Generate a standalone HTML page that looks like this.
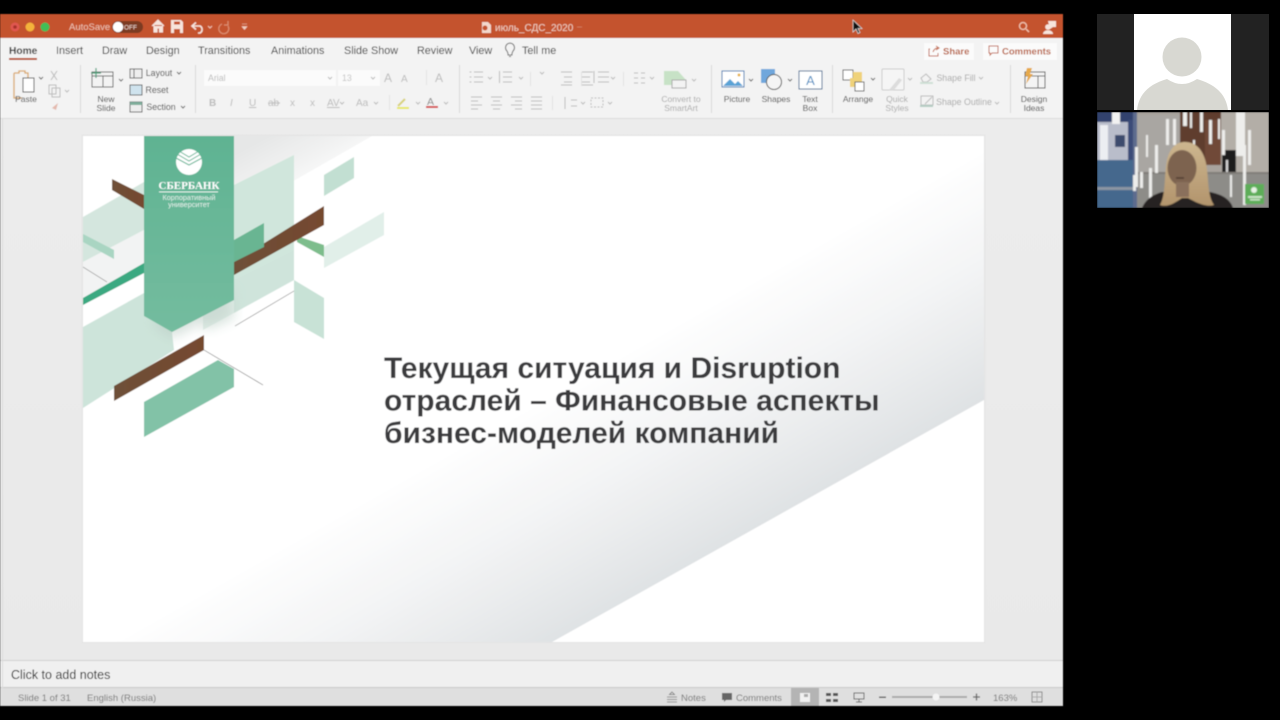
<!DOCTYPE html>
<html><head><meta charset="utf-8"><style>
html,body{margin:0;padding:0;background:#000;width:1280px;height:720px;overflow:hidden}
svg{display:block}
text{font-family:"Liberation Sans",sans-serif}
.t{font-size:10.8px;fill:#333}
.r{font-size:8.5px;fill:#444;text-anchor:middle}
.d{font-size:8.5px;fill:#aaa;text-anchor:middle}
.s{font-size:9.5px;fill:#777}
.i{fill:none;stroke:#666;stroke-width:1}
.g{fill:none;stroke:#bbb;stroke-width:1}
</style></head><body>
<svg width="1280" height="720" viewBox="0 0 1280 720" xmlns="http://www.w3.org/2000/svg">
<defs>
<linearGradient id="gr" gradientUnits="userSpaceOnUse" x1="768" y1="521" x2="660" y2="330"><stop offset="0" stop-color="#dfe2e4"/><stop offset=".5" stop-color="#f2f3f4"/><stop offset="1" stop-color="#fff"/></linearGradient>
<linearGradient id="sh" gradientUnits="userSpaceOnUse" x1="300" y1="210" x2="262" y2="140"><stop offset="0" stop-color="#fff"/><stop offset="1" stop-color="#e6e7e7"/></linearGradient>
<linearGradient id="ban" x1="0" y1="0" x2="0" y2="1"><stop offset="0" stop-color="#5fb392"/><stop offset="1" stop-color="#74bc9f"/></linearGradient>
<linearGradient id="br" x1="0" y1="0" x2="1" y2="0"><stop offset="0" stop-color="#6e5038"/><stop offset="1" stop-color="#75482f"/></linearGradient>
<linearGradient id="ca" x1="0" y1="0" x2="0" y2="1"><stop offset="0" stop-color="#ececec"/><stop offset="1" stop-color="#e9e9e9"/></linearGradient>
<linearGradient id="hair" x1="0" y1="0" x2="0" y2="1"><stop offset="0" stop-color="#cdb68f"/><stop offset="1" stop-color="#b2946c"/></linearGradient>
<filter id="bl" x="-30%" y="-30%" width="160%" height="160%"><feGaussianBlur stdDeviation="6"/></filter>
<filter id="v" x="-5%" y="-5%" width="110%" height="110%"><feGaussianBlur stdDeviation=".8"/></filter>
<filter id="u"><feGaussianBlur stdDeviation=".4"/></filter>
<clipPath id="vc"><rect x="1097" y="112" width="172" height="96"/></clipPath>
<clipPath id="pc"><rect x="1097" y="14" width="172" height="96"/></clipPath>
<clipPath id="sc"><rect x="83" y="136" width="901" height="506"/></clipPath>
</defs>
<rect width="1280" height="720" fill="#000"/>

<g filter="url(#u)">
<!-- window -->
<rect x="0" y="14" width="1063" height="692" fill="#ebebeb"/>
<rect x="0" y="14" width="1063" height="24" fill="#c4532f"/>
<rect x="0" y="38" width="1063" height="80" fill="#f3f3f3"/>
<rect x="0" y="118" width="1063" height="1" fill="#dcdcdc"/>
<rect x="0" y="119" width="1063" height="541" fill="url(#ca)"/>
<rect x="0" y="660" width="1063" height="1" fill="#d2d2d2"/>
<rect x="0" y="661" width="1063" height="27" fill="#f0f0f0"/>
<rect x="0" y="688" width="1063" height="18" fill="#dfdfdf"/>
<rect x="0" y="687" width="1063" height="1" fill="#c9c9c9"/>
<rect x="2" y="119" width="1" height="569" fill="#dcdcdc"/>

<!-- traffic lights -->
<circle cx="15" cy="27" r="4.5" fill="#e0574f"/><circle cx="15" cy="27" r="1.8" fill="#a8322c"/>
<circle cx="30" cy="27" r="4.5" fill="#f4b33a"/>
<circle cx="45" cy="27" r="4.5" fill="#3fbf57"/>
<text x="69" y="30" font-size="9.5" fill="#eec3b2">AutoSave</text>
<rect x="112" y="21" width="31" height="12" rx="6" fill="#7c3a24"/>
<circle cx="118" cy="27" r="5.2" fill="#fff"/>
<text x="124" y="29.5" font-size="6.5" fill="#f2d9cf">OFF</text>
<!-- home -->
<path d="M152 26l6-6 6 6M154 25v7h3v-4h2.5v4h3v-7" fill="#f7e4dc" stroke="#f7e4dc" stroke-width="1"/>
<!-- save -->
<path d="M171 20h10l2 2v11h-12z" fill="#f7e4dc"/><rect x="174" y="21.500" width="6" height="3" fill="#c4532f"/><rect x="174" y="29" width="6" height="4" fill="#c4532f"/>
<!-- undo -->
<path d="M193 26h7a4 4 0 0 1 0 7h-2M196 22.500l-4 3.500 4 3.500" fill="none" stroke="#f7e4dc" stroke-width="1.600"/>
<path d="M208 26l2 2 2-2" fill="none" stroke="#eec3b2"/>
<path d="M222 24a5 5 0 1 0 6 2M228 21v4h-4" fill="none" stroke="#dc8d70" stroke-width="1.200"/>
<path d="M242 24h5M242 26.500h5l-2.500 3z" fill="#f0cdbf" stroke="#f0cdbf" stroke-width=".6"/>
<!-- title -->
<path d="M482 22h6l3 3v8h-9z" fill="#f3d8cc"/><circle cx="485" cy="28" r="2.500" fill="#c4532f"/>
<text x="495" y="31" font-size="10" fill="#f0cfc1">июль_СДС_2020</text>
<path d="M577 27h5" stroke="#d07a5c" stroke-width="1"/>
<!-- right title icons -->
<circle cx="1023" cy="26" r="3.500" fill="none" stroke="#f0c3ae" stroke-width="1.300"/><path d="M1026 29l3 3" stroke="#f0c3ae" stroke-width="1.400"/>
<path d="M1048 21h8v6h-3l-3 2z" fill="#f7e4dc"/><circle cx="1048" cy="27" r="2.800" fill="#f7e4dc"/><path d="M1043 34c0-5 10-5 10 0z" fill="#f7e4dc"/>
<!-- cursor -->
<path d="M853 20v12l3-3 2 4.500 2-1-2-4h4z" fill="#111" stroke="#ddd" stroke-width=".7"/>

<!-- tabs -->
<text x="9" y="54" font-size="10.200" font-weight="bold" fill="#333">Home</text>
<rect x="9" y="58" width="28" height="2" fill="#b9512f"/>
<text class="t" x="56" y="54">Insert</text>
<text class="t" x="102" y="54">Draw</text>
<text class="t" x="146" y="54">Design</text>
<text class="t" x="198" y="54">Transitions</text>
<text class="t" x="271" y="54">Animations</text>
<text class="t" x="344" y="54">Slide Show</text>
<text class="t" x="417" y="54">Review</text>
<text class="t" x="469" y="54">View</text>
<path d="M507 51a4.500 4.500 0 1 1 6 0l-1 2.500v1.500h-4v-1.500z" class="i" fill="none"/><path d="M509 56.500h2" class="i"/>
<text class="t" x="522" y="54">Tell me</text>
<!-- share/comments -->
<rect x="924" y="43" width="50" height="17" fill="#fbfbfb"/>
<rect x="983" y="43" width="74" height="17" fill="#fbfbfb"/>
<path d="M930 49h-1v7h9v-3M933 52c1-3 3-4 5-4M936 46l3 2-3 2" fill="none" stroke="#c26a4d" stroke-width="1"/>
<text x="943" y="54.500" font-size="9.500" font-weight="bold" fill="#b9603f">Share</text>
<path d="M989 46h9v7h-6l-2 2v-2h-1z" fill="none" stroke="#c26a4d" stroke-width="1"/>
<text x="1002" y="54.500" font-size="9.500" font-weight="bold" fill="#b9603f">Comments</text>

<!-- ribbon separators -->
<g fill="#d9d9d9"><rect x="80" y="65" width="1" height="48"/><rect x="195" y="65" width="1" height="48"/><rect x="459" y="65" width="1" height="48"/><rect x="711" y="65" width="1" height="48"/><rect x="832" y="65" width="1" height="48"/><rect x="1010" y="65" width="1" height="48"/></g>

<!-- paste -->
<path d="M14 73h5v-2h6v2h3v6M14 73v25h8" fill="none" stroke="#d9a86b" stroke-width="1.300"/>
<rect x="23" y="78" width="11" height="14" fill="#fff" stroke="#555"/>
<path d="M39 77l2 2 2-2" class="i"/>
<text class="r" x="26" y="102">Paste</text>
<path d="M51 71l6 9M57 71l-6 9" class="g"/><rect x="49" y="85" width="7" height="9" class="g"/><rect x="52" y="88" width="8" height="9" class="g" fill="#f3f3f3"/>
<path d="M65 90l2 2 2-2" class="g"/>
<path d="M52 108l6-5-2 7z" fill="#e3b9ad"/>

<!-- new slide -->
<rect x="92" y="72" width="21" height="15" fill="#f3f3f3" stroke="#666"/><path d="M92 76h21M103 76v11" class="i"/><path d="M96 68v10M91 73h10" stroke="#4ca27c" stroke-width="1.200"/>
<path d="M119 79l2 2 2-2" class="i"/>
<text class="r" x="106" y="102">New</text><text class="r" x="106" y="111">Slide</text>
<rect x="130" y="69" width="12" height="9" fill="#eee" stroke="#666"/><path d="M134 69v9" class="i"/>
<text class="r" x="159" y="76" style="font-size:8.800px">Layout</text><path d="M177 72l2 2 2-2" class="i"/>
<rect x="130" y="85" width="12" height="10" fill="#cfe3ee" stroke="#666"/>
<text class="r" x="157" y="93" style="font-size:8.800px">Reset</text>
<rect x="130" y="102" width="12" height="10" fill="#eee" stroke="#666"/><rect x="130" y="102" width="12" height="3" fill="#7fae9b"/>
<text class="r" x="161" y="110" style="font-size:8.800px">Section</text><path d="M181 106l2 2 2-2" class="i"/>

<!-- font -->
<rect x="204" y="70" width="132" height="16" fill="#fbfbfb"/>
<text x="208" y="81" font-size="8.800" fill="#bbb">Arial</text>
<path d="M328 77l2 2 2-2" class="g" stroke-width="1"/>
<rect x="338" y="70" width="42" height="16" fill="#fbfbfb"/>
<text x="342" y="81" font-size="8.800" fill="#c4c4c4">13</text>
<path d="M371 77l2 2 2-2" class="g"/>
<text x="384" y="82" font-size="12" fill="#bbb">A</text><text x="401" y="82" font-size="10" fill="#bbb">A</text>
<text x="435" y="82" font-size="12" fill="#bbb">A</text>
<rect x="426" y="70" width="1" height="15" fill="#e3e3e3"/>
<g font-size="10" fill="#bbb">
<text x="209" y="106" font-weight="bold">B</text><text x="230" y="106" font-style="italic">I</text><text x="249" y="106" text-decoration="underline">U</text><text x="268" y="106">ab</text><text x="290" y="106">x</text><text x="310" y="106">x</text><text x="327" y="106" text-decoration="underline">AV</text><text x="356" y="106">Aa</text>
</g>
<path d="M268 103h12" class="g"/>
<path d="M340 102l2 2 2-2M374 102l2 2 2-2" class="g"/>
<path d="M398 106l7-7" stroke="#d8d27a" stroke-width="2"/><rect x="397" y="107" width="12" height="2" fill="#e7e75f"/>
<path d="M416 102l2 2 2-2M444 102l2 2 2-2" class="g"/>
<text x="427" y="105" font-size="10.500" fill="#888">A</text><rect x="426" y="106" width="12" height="2" fill="#d5484e"/>
<rect x="389" y="95" width="1" height="15" fill="#e3e3e3"/>

<!-- paragraph -->
<g class="g">
<path d="M474 72h9M474 77h9M474 82h9M469.500 72h2M469.500 77h2M469.500 82h2"/>
<path d="M503 72h9M503 77h9M503 82h9M499.500 71v12"/>
<path d="M540 72l2 2 2-2"/>
<path d="M561 72h11M564 77h8M564 82h8M561 85h11M582 72h11M582 77h8M582 82h8M582 85h11"/>
<path d="M598 72h11M598 77h11M598 82h11M594 71v12"/>
<path d="M634 73h4M634 78h4M634 83h4M641 73h4M641 78h4M641 83h4"/>
<path d="M471 97h11M471 101h7M471 105h11M471 109h7"/>
<path d="M491 97h11M493 101h7M491 105h11M493 109h7"/>
<path d="M511 97h11M515 101h7M511 105h11M515 109h7"/>
<path d="M531 97h11M531 101h11M531 105h11M531 109h11"/>
<path d="M565 97v12M571 100h6M571 106h6"/>
<rect x="591" y="98" width="12" height="9" stroke-dasharray="2 1.500"/>
<path d="M488 77l2 2 2-2M519 77l2 2 2-2M611 77l2 2 2-2M650 77l2 2 2-2M581 102l2 2 2-2M608 102l2 2 2-2"/>
</g>
<g fill="#e2e2e2"><rect x="530" y="72" width="1" height="14"/><rect x="581" y="72" width="1" height="14"/><rect x="623" y="72" width="1" height="14"/><rect x="552" y="96" width="1" height="14"/></g>
<path d="M664 71h14l8 9-8 5h-14z" fill="#c7e2c6"/><rect x="672" y="80" width="14" height="8" fill="#f3f3f3" stroke="#aaa"/>
<path d="M692 79l2 2 2-2" class="g"/>
<text class="d" x="681" y="102">Convert to</text><text class="d" x="681" y="111">SmartArt</text>

<!-- insert -->
<rect x="722" y="71" width="22" height="16" fill="#fff" stroke="#2e7ab5"/>
<path d="M723 86l7-7 5 5 3-3 5 5z" fill="#5aa3d6"/><circle cx="739" cy="75" r="1.500" fill="#e9b64f"/>
<path d="M749 79l2 2 2-2" class="i"/>
<text class="r" x="737" y="102">Picture</text>
<rect x="761" y="69" width="14" height="14" fill="#6fa7dc"/>
<circle cx="774" cy="82" r="7.500" fill="#f5f5f5" stroke="#555"/>
<path d="M788 79l2 2 2-2" class="i"/>
<text class="r" x="776" y="102">Shapes</text>
<rect x="799" y="71" width="23" height="18" fill="#fff" stroke="#3b6e95"/>
<text x="810.500" y="85" font-size="13" fill="#4a8dc2" text-anchor="middle">A</text>
<text class="r" x="810" y="102">Text</text><text class="r" x="810" y="111">Box</text>

<!-- drawing -->
<rect x="843" y="70" width="10" height="10" fill="#fff" stroke="#666"/>
<path d="M853 72h9v15h-9z" fill="#efd27a"/><rect x="850" y="78" width="6" height="9" fill="#efd27a"/>
<rect x="855" y="82" width="9" height="9" fill="#fff" stroke="#666"/>
<path d="M871 78l2 2 2-2" class="i"/>
<text class="r" x="858" y="102">Arrange</text>
<rect x="882" y="69" width="22" height="21" rx="1" fill="#f5f5f5" stroke="#ccc"/>
<path d="M889 90l10-12 3 2-8 10z" fill="#dcdcdc"/>
<path d="M908 78l2 2 2-2" class="g"/>
<text class="d" x="897" y="102">Quick</text><text class="d" x="897" y="111">Styles</text>
<path d="M921 78l5-4 5 5-4 3h-4z" class="g"/><rect x="920" y="82" width="13" height="2" fill="#cfe0d6"/>
<text class="d" x="956" y="81" style="font-size:8.800px">Shape Fill</text><path d="M979 77l2 2 2-2" class="g"/>
<rect x="921" y="96" width="12" height="9" class="g"/><rect x="920" y="105" width="13" height="2" fill="#b5cec4"/><path d="M925 104l7-7" class="g"/>
<text class="d" x="964" y="105" style="font-size:8.800px">Shape Outline</text><path d="M995 102l2 2 2-2" class="g"/>

<!-- ideas -->
<rect x="1025" y="72" width="20" height="16" fill="#f4f4f4" stroke="#555"/><path d="M1025 76h20M1038 76v12" class="i"/>
<path d="M1027 68h5l-2 6h3l-7 10 2-8h-3z" fill="#e6a94a"/>
<text class="r" x="1034" y="102">Design</text><text class="r" x="1034" y="111">Ideas</text>

<!-- slide -->
<rect x="81.500" y="134.500" width="904" height="509" fill="#e5e5e5"/>
<rect x="83" y="136" width="901" height="506" fill="#fff"/>
<g clip-path="url(#sc)">
<polygon points="83,136 984,136 984,400 552,642 83,642" fill="url(#gr)"/>
<polygon points="234,136 372,136 234,215" fill="url(#sh)"/>
<!-- left light panel -->
<polygon points="83,217 144,182 144,230 83,262" fill="#d4e6de"/>
<polygon points="83,262 144,230 144,263 83,298" fill="#f2f3f3"/>
<polygon points="83,234 114,250 114,259 83,242" fill="#a9d5c2"/>
<line x1="83" y1="267" x2="107" y2="282" stroke="#888" stroke-width=".7"/>
<polygon points="83,298 144,263 144,273 83,305" fill="#3aa981"/>
<polygon points="83,327 144,293 144,316 172,332 174,350 83,408" fill="#cde4da"/>
<!-- central panel -->
<polygon points="234,185 294,155 294,280 234,313" fill="#d0e6dc"/>
<polygon points="234,280 294,250 294,280 203,330 203,300" fill="#cfe3da" opacity=".6"/>
<polygon points="234,305 204,318 204,330 234,318" fill="#c6d8cf" filter="url(#bl)" opacity=".7"/>
<polygon points="324,175 354,157 354,178 324,196" fill="#c2dfd2"/>
<polygon points="324,247 384,212 384,235 324,268" fill="#e1efe9"/>
<polygon points="294,280 324,298 324,339 294,322" fill="#c8e2d6"/>
<polygon points="297,236 324,245 324,257 297,242" fill="#7dbd8c"/>
<polygon points="234,262 324,206 324,225 234,275" fill="url(#br)"/>
<polygon points="234,240 264,223 264,247 234,262" fill="#69b592"/>
<polygon points="112,179 144,195 144,209 112,190" fill="url(#br)"/>
<line x1="235" y1="326" x2="294" y2="291" stroke="#888" stroke-width=".7"/>
<line x1="204" y1="350" x2="263" y2="385" stroke="#777" stroke-width=".7"/>
<polygon points="150,322 172,338 228,310 234,290" fill="#bccdc5" filter="url(#bl)" opacity=".6"/>
<polygon points="114,386 204,335 204,350 114,401" fill="url(#br)"/>
<polygon points="144,402 218,360 234,369 234,387 144,437" fill="#82c2a7"/>
<!-- banner -->
<polygon points="144,136 234,136 234,300 172,332 144,316" fill="url(#ban)"/>
<!-- logo -->
<circle cx="189" cy="162" r="13" fill="#fff"/>
<path d="M176 158l13 7 13-7M177 154l12 7 12-7M179 151l10 6 10-6" fill="none" stroke="#63b595" stroke-width="1"/>
<text x="189" y="189" style="font-family:'Liberation Serif',serif" font-size="11" fill="#fff" text-anchor="middle" font-weight="bold">СБЕРБАНК</text>
<rect x="159" y="191.500" width="59" height=".8" fill="#fff"/>
<text x="189" y="200" font-size="7.300" fill="#e3f1eb" text-anchor="middle">Корпоративный</text>
<text x="189" y="207" font-size="7.300" fill="#e3f1eb" text-anchor="middle">университет</text>
<!-- title text -->
<g font-size="30" font-weight="bold" fill="#3a3b3d">
<text x="384" y="378">Текущая ситуация и Disruption</text>
<text x="384" y="410.500">отраслей – Финансовые аспекты</text>
<text x="384" y="443">бизнес-моделей компаний</text>
</g>
</g>

<!-- notes -->
<text x="11" y="679" font-size="12.500" fill="#222">Click to add notes</text>
<!-- status -->
<text class="s" x="18" y="701">Slide 1 of 31</text>
<text class="s" x="87" y="701">English (Russia)</text>
<path d="M667 697h10M667 699.500h10M667 702h10M672 692l2.500 2.500h-5z" stroke="#777" stroke-width=".8" fill="none"/>
<text class="s" x="681" y="701">Notes</text>
<path d="M722 693h10v7h-6l-2 2v-2h-2z" fill="#666"/>
<text class="s" x="736" y="701">Comments</text>
<rect x="791" y="688" width="28" height="18" fill="#b4b4b4"/>
<rect x="800" y="693" width="10" height="9" fill="#f1f1f1"/><rect x="804" y="694" width="4" height="3" fill="#aaa"/>
<g fill="#555"><rect x="826" y="693" width="5" height="3"/><rect x="833" y="693" width="5" height="3"/><rect x="826" y="699" width="5" height="3"/><rect x="833" y="699" width="5" height="3"/></g>
<path d="M854 693h10v6h-10zM859 699v3M856 702h6" fill="none" stroke="#666"/>
<rect x="879" y="696.500" width="7" height="1.500" fill="#666"/>
<rect x="892" y="696" width="75" height="2" fill="#aaa"/>
<circle cx="936" cy="697" r="3.500" fill="#f4f4f4"/>
<path d="M973 697h7M976.500 693.500v7" stroke="#666" stroke-width="1.300"/>
<text class="s" x="993" y="701">163%</text>
<rect x="1032" y="692" width="10" height="10" fill="none" stroke="#888"/><path d="M1037 692v10M1032 697h10" stroke="#aaa"/>
</g>

<!-- participant 1 -->
<rect x="1097" y="14" width="172" height="96" fill="#222"/>
<rect x="1134" y="14" width="97" height="96" fill="#fff"/>
<g clip-path="url(#pc)">
<circle cx="1182" cy="57" r="19.500" fill="#d8d8d2"/>
<path d="M1137 110C1139 93 1150 84 1167 79Q1182 89 1197 79C1214 84 1226 93 1228 110z" fill="#d8d8d2"/>
</g>

<!-- participant 2 -->
<g clip-path="url(#vc)">
<g filter="url(#v)">
<rect x="1097" y="112" width="172" height="96" fill="#a8a39d"/>
<rect x="1097" y="112" width="40" height="96" fill="#5d6c8e"/>
<rect x="1137" y="115" width="45" height="93" fill="#a9a6a2"/>
<rect x="1097" y="112" width="36" height="48" fill="#b9bdca"/>
<rect x="1097" y="112" width="36" height="10" fill="#31436e"/>
<rect x="1100" y="125" width="8" height="35" fill="#eceef2"/>
<rect x="1115" y="135" width="10" height="12" fill="#3c4b6d"/>
<rect x="1128" y="120" width="5" height="42" fill="#3a4c78"/>
<rect x="1097" y="160" width="36" height="48" fill="#44688d"/>
<rect x="1097" y="187" width="36" height="3" fill="#8d96a3"/>
<rect x="1112" y="112" width="8" height="12" fill="#f2f2f2"/>
<rect x="1180" y="112" width="41" height="52" fill="#5f3d2f"/>
<rect x="1205" y="120" width="16" height="45" fill="#6f4a39"/>
<rect x="1221" y="112" width="48" height="96" fill="#b3aea7"/>
<rect x="1222" y="150" width="14" height="22" fill="#1e1d1e"/>
<rect x="1226" y="160" width="2" height="12" fill="#ddd"/>
<rect x="1137" y="172" width="132" height="2" fill="#7f7c77"/>
<rect x="1137" y="174" width="132" height="34" fill="#8d8c88"/>
<g fill="#eeeeec">
<rect x="1166" y="119" width="3" height="26"/><rect x="1173" y="119" width="3" height="26"/><rect x="1183" y="112" width="4" height="14"/><rect x="1190" y="112" width="2" height="16"/><rect x="1200" y="112" width="3" height="20"/><rect x="1209" y="120" width="3" height="24"/><rect x="1218" y="119" width="2" height="20"/><rect x="1222" y="130" width="3" height="25"/><rect x="1236" y="112" width="9" height="44"/><rect x="1243" y="145" width="3" height="60"/><rect x="1248" y="130" width="3" height="35"/><rect x="1135" y="147" width="3" height="40"/><rect x="1146" y="135" width="2" height="22"/><rect x="1149" y="168" width="3" height="30"/><rect x="1155" y="145" width="3" height="28"/><rect x="1140" y="172" width="3" height="16"/><rect x="1193" y="140" width="2" height="12"/><rect x="1133" y="175" width="3" height="16"/><rect x="1230" y="175" width="2" height="22"/>
</g>
<path d="M1142 208C1146 198 1155 194 1162 192L1210 192C1220 194 1230 198 1233 208z" fill="#262321"/>
<path d="M1160 205C1166 195 1164 175 1167 160C1170 147 1177 142 1185 142C1196 142 1203 150 1206 163C1209 178 1207 195 1214 205C1205 208 1192 200 1188 198H1182C1176 202 1168 208 1160 205z" fill="url(#hair)"/>
<ellipse cx="1182" cy="168" rx="14.500" ry="18" fill="#7d6350"/>
<rect x="1176" y="182" width="13" height="15" fill="#8a6f5c"/>
<path d="M1176 178h8" stroke="#4f3a2f" stroke-width="1.500"/>
<rect x="1245" y="184" width="19" height="20" fill="#5dad58"/>
<circle cx="1254" cy="190" r="3" fill="#e8f3e6"/>
<rect x="1248" y="196" width="14" height="2" fill="#cfe6cc"/><rect x="1250" y="199" width="10" height="1.500" fill="#cfe6cc"/>
</g>
</g>
</svg>
</body></html>
